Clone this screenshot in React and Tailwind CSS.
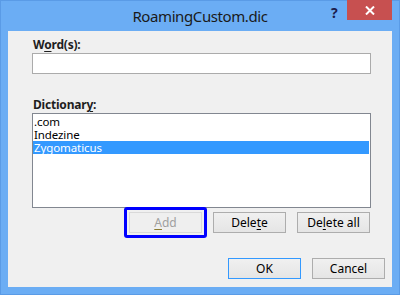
import React from "react";

const font = { fontFamily: '"Segoe UI", "Noto Sans", "Open Sans", sans-serif' };

function Btn({ children, className = "" }) {
  return (
    <div
      className={
        "w-[73px] h-[21px] flex items-center justify-center text-[12px] leading-none text-black border border-[#adadad] bg-gradient-to-b from-[#f0f0f0] to-[#e5e5e5] " +
        className
      }
    >
      {children}
    </div>
  );
}

export default function App() {
  return (
    <div
      className="w-[400px] h-[295px] flex flex-col bg-[#6badf4] border border-[#5a9be6] box-border"
      style={font}
    >
      {/* title bar */}
      <div className="h-[30px] flex items-start shrink-0">
        <div className="w-[69px]" />
        <div className="flex-1 text-center text-[15px] tracking-[-0.4px] leading-none pt-[8px] text-[#1a1a1a]">
          RoamingCustom.dic
        </div>
        <div className="w-[69px] flex items-start">
          <div className="w-[17px] pl-[1px] pt-[5px] text-[14px] font-bold leading-none text-[#1c1c4c]">?</div>
          <div className="w-[45px] h-[20px] -mt-px bg-[#c75050] flex items-center justify-center">
            <svg width="10" height="9" viewBox="0 0 10 9">
              <path d="M1 0.5 L9 8.5 M9 0.5 L1 8.5" stroke="#ffffff" strokeWidth="2" />
            </svg>
          </div>
        </div>
      </div>

      {/* client */}
      <div className="mx-[7px] h-[256px] bg-[#f0f0f0] flex flex-col pl-[24px] pr-[7px]">
        <div className="mt-[6px] h-[16px] text-[12px] tracking-[-0.2px] leading-[16px] font-bold text-[#1e1e1e] pl-px">
          W<u className="underline-offset-2">o</u>rd(s):
        </div>
        <div className="w-[339px] h-[21px] bg-white border border-[#ababab]" />

        <div className="mt-[23px] h-[16px] text-[12px] tracking-[-0.2px] leading-[16px] font-bold text-[#1e1e1e] pl-px">
          Dictionar<u className="underline-offset-2">y</u>:
        </div>
        <div className="w-[339px] h-[95px] bg-white border border-[#828790] pt-[1px] text-[11.5px] tracking-[-0.1px]">
          <div className="h-[13px] leading-[13px] pl-[1px] text-black overflow-hidden">.com</div>
          <div className="h-[13px] leading-[13px] pl-[1px] text-black overflow-hidden">Indezine</div>
          <div className="h-[13px] leading-[13px] pl-[1px] mr-px bg-[#3399ff] text-white overflow-hidden">Zygomaticus</div>
        </div>

        <div className="mt-[4px] w-[339px] flex justify-end gap-[11px] pr-px">
          <div className="relative">
            <div className="w-[73px] h-[21px] flex items-center justify-center text-[12px] leading-none text-[#a0a0a0] border border-[#d9d9d9] bg-[#efefef]">
              <span>
                <u className="decoration-[#8a7a30] underline-offset-2">A</u>dd
              </span>
            </div>
            <div className="absolute -left-[5px] -right-[5px] -top-[5px] -bottom-[5px] border-[3px] border-[#0000ff] rounded-[3px] pointer-events-none" />
          </div>
          <Btn>
            <span>
              Dele<u className="underline-offset-2">t</u>e
            </span>
          </Btn>
          <Btn>
            <span>
              De<u className="underline-offset-2">l</u>ete all
            </span>
          </Btn>
        </div>

        <div className="mt-[25px] flex justify-end gap-[11px]">
          <Btn className="!border-[#3399ff]">OK</Btn>
          <Btn>Cancel</Btn>
        </div>
      </div>
    </div>
  );
}
